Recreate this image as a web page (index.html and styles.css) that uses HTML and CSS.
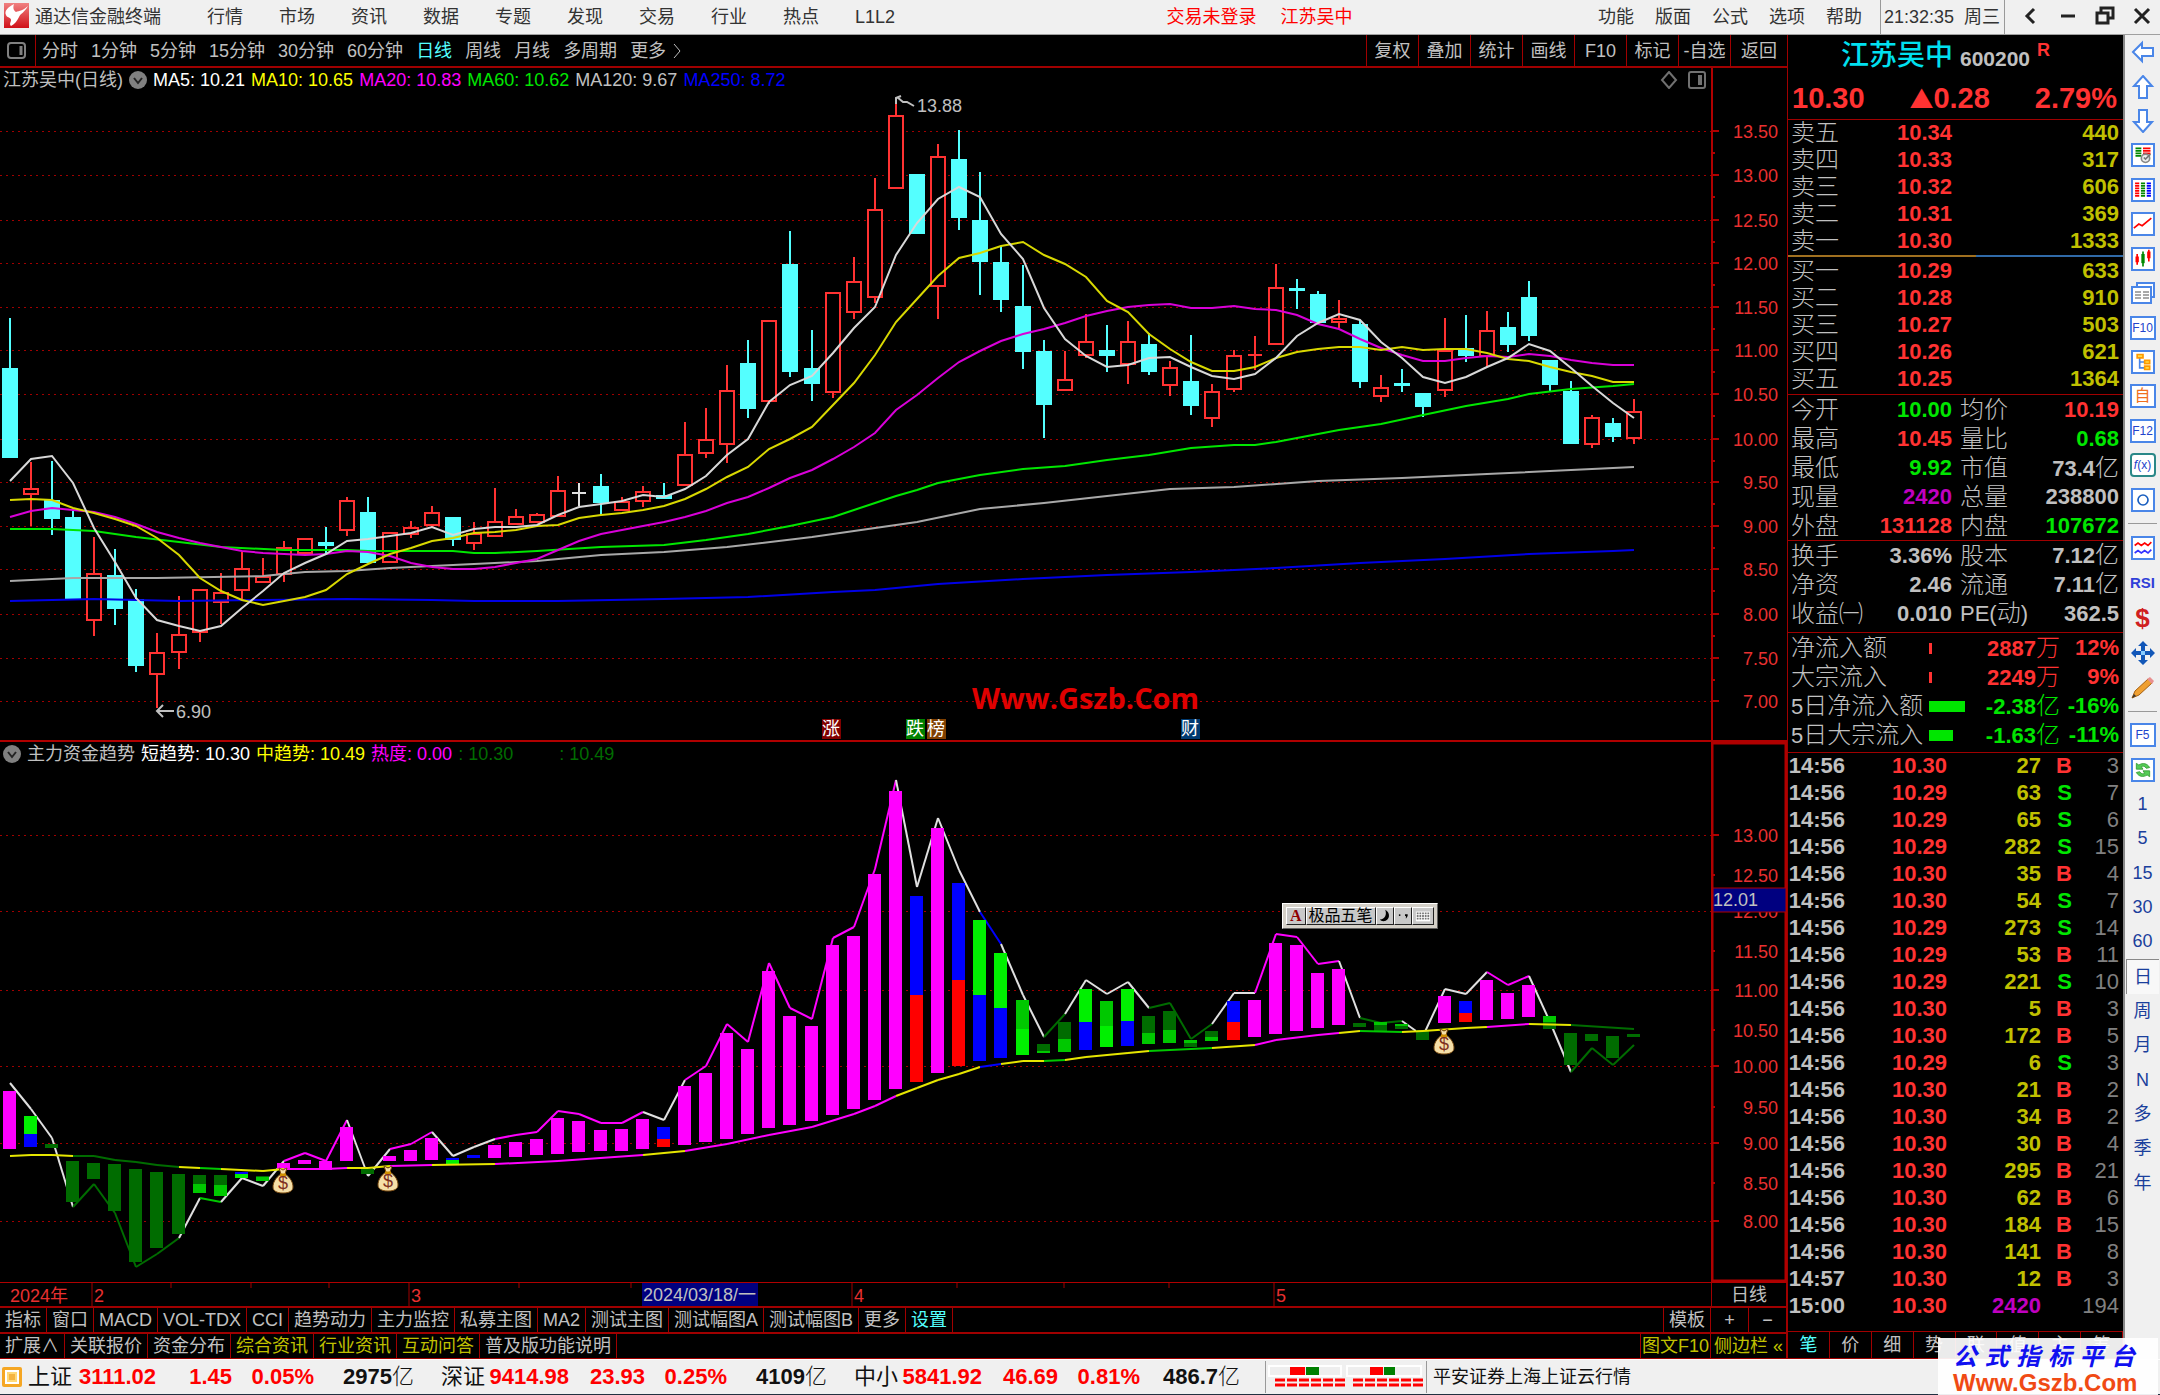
FILE: index.html
```html
<!DOCTYPE html>
<html lang="zh-CN">

<head>
    <meta charset="UTF-8">
    <meta name="viewport" content="width=device-width, initial-scale=1.0">
    <title>通达信金融终端 - 江苏吴中</title>
    <link rel="stylesheet" href="styles.css">
</head>

<body>
    <header class="titlebar">
        <svg class="logo" viewBox="0 0 25 25">
            <defs>
                <linearGradient id="logo-bg" x1="0" y1="0" x2="0" y2="1">
                    <stop offset="0" stop-color="#f08080" />
                    <stop offset="1" stop-color="#d01018" />
                </linearGradient>
            </defs>
            <rect width="25" height="25" fill="url(#logo-bg)" />
            <path d="M10 1C4 4 0 8 2 12c1 3 5 2 5 5 0 2-2 4 0 6 4-2 6-5 8-9 1-3 6-5 9-11-4 4-9 5-12 6-3-2-3-5-2-8z" fill="#fff" />
        </svg>
        <span class="brand">通达信金融终端</span>
        <nav class="menu">
            <button>行情</button><button>市场</button><button>资讯</button><button>数据</button><button>专题</button><button>发现</button><button>交易</button><button>行业</button><button>热点</button><button>L1L2</button>
        </nav>
        <div class="session"><span>交易未登录</span><span>江苏吴中</span></div>
        <nav class="menu menu-right">
            <button>功能</button><button>版面</button><button>公式</button><button>选项</button><button>帮助</button>
        </nav>
        <div class="clock"><span>21:32:35</span><span>周三</span></div>
        <div class="window-buttons">
            <button aria-label="后退"><svg viewBox="0 0 20 20"><path d="M13 3L6 10l7 7" /></svg></button>
            <button aria-label="最小化"><svg viewBox="0 0 20 20"><path d="M3 10h14" /></svg></button>
            <button aria-label="还原"><svg viewBox="0 0 20 20"><path d="M6 6V2h12v10h-4M2 7h11v10H2z" /></svg></button>
            <button aria-label="关闭"><svg viewBox="0 0 20 20"><path d="M3 3l14 14M17 3L3 17" /></svg></button>
        </div>
    </header>

    <main class="workspace">
        <section class="charts">
            <div class="periods">
                <button class="panel-toggle" aria-label="面板"><svg viewBox="0 0 20 18"><rect x="1" y="1" width="17" height="15" rx="3" /><path d="M14 4v9" stroke-width="3" /></svg></button>
                <nav class="period-list">
                    <button>分时</button><button>1分钟</button><button>5分钟</button><button>15分钟</button><button>30分钟</button><button>60分钟</button><button class="active">日线</button><button>周线</button><button>月线</button><button>多周期</button><button class="more">更多<svg viewBox="0 0 10 16"><path d="M2 1l6 7-6 7" /></svg></button>
                </nav>
                <nav class="tools">
                    <button>复权</button><button>叠加</button><button>统计</button><button>画线</button><button>F10</button><button>标记</button><button>-自选</button><button>返回</button>
                </nav>
            </div>

            <div class="pane">
                <div class="plot">
                    <div class="legend">
                        <span>江苏吴中(日线)</span>
                        <svg class="drop" viewBox="0 0 18 18"><circle cx="9" cy="9" r="9" /><path d="M5 7l4 5 4-5" /></svg>
                        <span class="white">MA5: 10.21</span>
                        <span class="yellow">MA10: 10.65</span>
                        <span class="magenta">MA20: 10.83</span>
                        <span class="green">MA60: 10.62</span>
                        <span>MA120: 9.67</span>
                        <span class="blue">MA250: 8.72</span>
                        <svg class="pane-icons" viewBox="0 0 46 18"><path d="M9 1l7 8-7 8-7-8z" /><rect x="29" y="1" width="16" height="16" rx="2" /><path d="M40 4v10" stroke-width="4" /></svg>
                    </div>
                    <svg id="kline" class="canvas" viewBox="0 92 1711 648" preserveAspectRatio="none"></svg>
                </div>
                <svg id="kline-axis" class="axis" viewBox="0 68 76 672" preserveAspectRatio="none"></svg>
            </div>

            <div class="pane pane-trend">
                <div class="plot">
                    <div class="legend">
                        <svg class="drop" viewBox="0 0 18 18"><circle cx="9" cy="9" r="9" /><path d="M5 7l4 5 4-5" /></svg>
                        <span>主力资金趋势</span>
                        <span class="white">短趋势: 10.30</span>
                        <span class="yellow">中趋势: 10.49</span>
                        <span class="magenta">热度: 0.00</span>
                        <span class="darkgreen">: 10.30</span>
                        <span class="darkgreen apart">: 10.49</span>
                    </div>
                    <svg id="trend" class="canvas" viewBox="0 766 1711 516" preserveAspectRatio="none"></svg>
                </div>
                <svg id="trend-axis" class="axis" viewBox="0 742 76 540" preserveAspectRatio="none"></svg>
                <div class="ime">
                    <button class="ime-a">A</button>
                    <button>极品五笔</button>
                    <button aria-label="半角"><svg viewBox="0 0 14 18"><path d="M7 2c6 3 6 12-2 13-2 0-3-1-4-2 6 0 8-6 6-11z" /></svg></button>
                    <button aria-label="标点"><svg viewBox="0 0 14 18"><circle cx="3" cy="8" r="1" /><path d="M9 7h3v2l-2 3v-3H9z" /></svg></button>
                    <button aria-label="软键盘"><svg viewBox="0 0 18 18"><path d="M1 4h16v11H1z" fill="#fff" /><path d="M2 6h14M2 9h14M2 12h14" stroke="#777" stroke-width="2" stroke-dasharray="2 1" /></svg></button>
                </div>
            </div>

            <div class="dates">
                <svg id="dates" viewBox="0 1282 1711 24" preserveAspectRatio="none"></svg>
                <button class="axis-cell">日线</button>
            </div>
            <div class="tabs">
                <button>指标</button><button>窗口</button><button>MACD</button><button>VOL-TDX</button><button>CCI</button><button>趋势动力</button><button>主力监控</button><button>私募主图</button><button>MA2</button><button>测试主图</button><button>测试幅图A</button><button>测试幅图B</button><button>更多</button><button class="cyan">设置</button>
                <button class="push">模板</button>
                <div class="axis-cell zoom"><button>+</button><button>−</button></div>
            </div>
            <div class="tabs">
                <button>扩展∧</button><button>关联报价</button><button>资金分布</button><button class="gold">综合资讯</button><button class="gold">行业资讯</button><button class="gold">互动问答</button><button>普及版功能说明</button>
                <button class="push gold tight">图文F10</button>
                <button class="axis-cell gold tight">侧边栏 «</button>
            </div>
        </section>

        <aside class="quote">
            <div class="quote-head">
                <h1><span class="stock">江苏吴中</span> <span class="code">600200</span> <sup>R</sup></h1>
                <div class="price"><span>10.30</span><span><span class="arrow">▲</span>0.28</span><span>2.79%</span></div>
            </div>
            <table class="book" id="asks"></table>
            <div class="ratio"></div>
            <table class="book bids" id="bids"></table>
            <table class="info">
                <tr><th>今开</th><td class="dn">10.00</td><th>均价</th><td class="up">10.19</td></tr>
                <tr><th>最高</th><td class="up">10.45</td><th>量比</th><td class="dn">0.68</td></tr>
                <tr><th>最低</th><td class="dn">9.92</td><th>市值</th><td>73.4<i>亿</i></td></tr>
                <tr><th>现量</th><td class="vol">2420</td><th>总量</th><td>238800</td></tr>
                <tr><th>外盘</th><td class="up">131128</td><th>内盘</th><td class="dn">107672</td></tr>
            </table>
            <table class="info roomy">
                <tr><th>换手</th><td>3.36%</td><th>股本</th><td>7.12<i>亿</i></td></tr>
                <tr><th>净资</th><td>2.46</td><th>流通</th><td>7.11<i>亿</i></td></tr>
                <tr><th>收益㈠</th><td>0.010</td><th><b>PE(</b>动<b>)</b></th><td>362.5</td></tr>
            </table>
            <table class="flow">
                <tr class="up"><th>净流入额</th><td class="meter"><span style="width: 3px"></span></td><td>2887<i>万</i></td><td>12%</td></tr>
                <tr class="up"><th>大宗流入</th><td class="meter"><span style="width: 3px"></span></td><td>2249<i>万</i></td><td>9%</td></tr>
                <tr class="dn"><th><b>5</b>日净流入额</th><td class="meter"><span style="width: 36px"></span></td><td>-2.38<i>亿</i></td><td>-16%</td></tr>
                <tr class="dn"><th><b>5</b>日大宗流入</th><td class="meter"><span style="width: 24px"></span></td><td>-1.63<i>亿</i></td><td>-11%</td></tr>
            </table>
            <div class="ticks-wrap">
                <table class="ticks" id="ticks"></table>
            </div>
            <nav class="quote-tabs">
                <button class="cyan">笔</button><button>价</button><button>细</button><button>势</button><button>联</button><button>值</button><button>主</button><button>筹</button>
            </nav>
        </aside>

        <nav class="sidebar">
            <div class="side-group tall">
                <button aria-label="左"><svg viewBox="0 0 24 24"><path d="M2 12l9-9v5h11v8H11v5z" fill="#fff" stroke="#4a86e8" /></svg></button>
                <button aria-label="上"><svg viewBox="0 0 24 24"><path d="M12 1l9 10h-5v12H8V11H3z" fill="#fff" stroke="#4a86e8" /></svg></button>
                <button aria-label="下"><svg viewBox="0 0 24 24"><path d="M12 23l9-10h-5V1H8v12H3z" fill="#fff" stroke="#4a86e8" /></svg></button>
                <button aria-label="自选"><svg class="box" viewBox="0 0 24 24"><path d="M3 4h7M3 7h7M3 10h7M3 13h7" stroke="#080" /><path d="M12 4h9M12 7h9M12 10h9" stroke="#f00" /><circle cx="15" cy="16" r="5" fill="#eee" stroke="#888" /><path d="M13 15l2 2 6-6" stroke="#777" /></svg></button>
                <button aria-label="报价"><svg class="box" viewBox="0 0 24 24"><g stroke-dasharray="2 1"><path d="M5 3v18" stroke="#f00" stroke-width="5" /><path d="M12 3v18" stroke="#080" stroke-width="5" /><path d="M19 3v18" stroke="#00f" stroke-width="5" /></g></svg></button>
                <button aria-label="分时"><svg class="box" viewBox="0 0 24 24"><path d="M1 17l6-5 4 2 11-9" stroke="#f00" stroke-width="2" /></svg></button>
                <button aria-label="K线"><svg class="box" viewBox="0 0 24 24"><path d="M5 6v13M19 1v14" stroke="#f00" /><path d="M12 3v18" stroke="#080" /><path d="M3 9h4v7H3zM17 3h4v8h-4z" fill="#f00" /><path d="M10 6h4v11h-4z" fill="#080" /></svg></button>
                <button aria-label="多窗口"><svg viewBox="0 0 24 24"><path d="M6 5V2h17v14h-3" fill="#fff" stroke="#4a86e8" /><path d="M1 6h19v16H1z" fill="#fff" stroke="#4a86e8" stroke-width="2" /><path d="M4 11h6M4 14h6M4 17h6M12 11h6M12 14h6M12 17h6" stroke="#555" stroke-width="1" /></svg></button>
                <button><span class="key">F10</span></button>
                <button aria-label="板块"><svg class="box" viewBox="0 0 24 24"><path d="M8 6v13h6M8 12h6" stroke="#4a86e8" /><path d="M5 3h7v4H5zM14 10h6v4h-6zM14 17h6v4h-6z" fill="#fd4" stroke="#f90" /></svg></button>
                <button><span class="key orange">自</span></button>
                <button><span class="key">F12</span></button>
                <button><span class="key round"><em>f</em>(x)</span></button>
                <button aria-label="刷新"><svg class="box" viewBox="0 0 24 24"><circle cx="12" cy="12" r="6" stroke="#1a5fc0" /></svg></button>
            </div>
            <hr>
            <div class="side-group">
                <button aria-label="指标"><svg class="box" viewBox="0 0 24 24"><path d="M2 9l4-3 4 3 4-3 4 3 4-4" stroke="#f00" /><path d="M2 18l4-3 4 3 4-3 4 3 4-4" stroke="#33f" /></svg></button>
                <button class="rsi">RSI</button>
                <button class="dollar">$</button>
                <button aria-label="移动"><svg viewBox="0 0 24 24"><path d="M12 0l5 5h-3v5h5V7l5 5-5 5v-3h-5v5h3l-5 5-5-5h3v-5H5v3l-5-5 5-5v3h5V5H7z" fill="#1257b8" /><path d="M10 10h4v4h-4z" fill="#8cf" /></svg></button>
                <button aria-label="画笔"><svg viewBox="0 0 24 24"><path d="M1 22l3-7L17 3l4 4L8 19z" fill="#f0a030" stroke="#a66010" stroke-width="1" /><path d="M16 3l3-2 4 4-2 3z" fill="#e89090" /><path d="M1 22l2-4 2 2z" fill="#333" /></svg></button>
            </div>
            <hr>
            <div class="side-group tall">
                <button><span class="key">F5</span></button>
                <button aria-label="更新"><svg class="box" viewBox="0 0 24 24"><path d="M4 11V4l3 2c5-3 10-2 13 3l-4 1c-2-3-4-3-6-2l2 3zM20 13v7l-3-2c-5 3-10 2-13-3l4-1c2 3 4 3 6 2l-2-3z" fill="#5c5" stroke="#393" stroke-width="1" /></svg></button>
                <button>1</button><button>5</button><button>15</button><button>30</button><button>60</button><button class="pressed">日</button><button>周</button><button>月</button><button>N</button><button>多</button><button>季</button><button>年</button>
            </div>
        </nav>
    </main>

    <footer class="statusbar">
        <svg class="status-icon" viewBox="0 0 20 20"><rect width="20" height="20" rx="2" fill="#f5a623" /><path d="M4 4h12v12H4z" fill="#ffd978" stroke="#fff" stroke-width="2" /><path d="M7 7h6v6H7z" fill="#f5b440" /></svg>
        <div class="index"><span>上证</span><b>3111.02</b><b>1.45</b><b>0.05%</b><b class="amount">2975<i>亿</i></b></div>
        <div class="index"><span>深证</span><b>9414.98</b><b>23.93</b><b>0.25%</b><b class="amount">4109<i>亿</i></b></div>
        <div class="index"><span>中小</span><b>5841.92</b><b>46.69</b><b>0.81%</b><b class="amount">486.7<i>亿</i></b></div>
        <svg class="leds" viewBox="0 0 160 28">
            <path d="M3 3h72v10H3zM81 3h74v10H81z" fill="#eee" stroke="#fff" stroke-width="2" />
            <path d="M24 4h15v8H24zM104 4h13v8h-13z" fill="#f00" />
            <path d="M40 4h13v8H40zM118 4h11v8h-11z" fill="#008000" />
            <path d="M9 17h70M9 22h70M87 17h70M87 22h70" stroke="#f00" stroke-width="3" stroke-dasharray="10 2" />
        </svg>
        <span class="server">平安证券上海上证云行情</span>
    </footer>

    <div class="stamp">
        <div class="stamp-name"><span>公</span><span>式</span><span>指</span><span>标</span><span>平</span><span>台</span></div>
        <div class="stamp-url">Www.Gszb.Com</div>
    </div>

    <script src="chart.js"></script>
</body>

</html>
```
FILE: styles.css
```css
* {
    box-sizing: border-box;
}

body {
    margin: 0;
    height: 100vh;
    display: grid;
    grid-template-rows: 35px 1fr 36px;
    overflow: hidden;
    background: #000;
    color: #c0c0c0;
    font-family: "Liberation Sans", "Noto Sans CJK SC", sans-serif;
    font-size: 18px;
    line-height: 24px;
}

button {
    border: 0;
    padding: 0;
    background: none;
    color: inherit;
    font: inherit;
    white-space: nowrap;
    cursor: pointer;
}

svg {
    display: block;
    fill: none;
}

i {
    font-style: normal;
    font-weight: 300;
}

.white { color: #fff; }
.yellow { color: #ff0; }
.magenta { color: #f0f; }
.green { color: #00e600; }
.darkgreen { color: #006c00; }
.blue { color: #00f; }
.cyan { color: #54ffff; }
.gold { color: #c0c000; }

/* title bar */
.titlebar {
    display: flex;
    align-items: center;
    background: #f0f0f0;
    border-bottom: 1px solid #a0a0a0;
    color: #333;
}

.logo {
    width: 25px;
    height: 25px;
    margin: 0 6px 4px 4px;
}

.brand {
    margin-right: 46px;
}

.menu {
    display: flex;
    gap: 36px;
}

.session {
    display: flex;
    gap: 24px;
    margin: 0 auto;
    padding-left: 26px;
    color: #f00;
}

.menu-right {
    gap: 21px;
    margin-right: 18px;
}

.clock {
    display: flex;
    align-items: center;
    gap: 10px;
    height: 34px;
    padding: 0 4px 0 3px;
    border-left: 1px solid #999;
    border-right: 1px solid #999;
}

.window-buttons {
    display: flex;
    gap: 17px;
    padding: 0 8px 2px 16px;
}

.window-buttons svg {
    width: 20px;
    height: 20px;
    stroke: #222;
    stroke-width: 3;
}

/* layout */
.workspace {
    display: grid;
    grid-template-columns: 1fr 336px 37px;
    min-height: 0;
}

.charts {
    display: grid;
    grid-template-rows: 33px 672fr 542fr 24px 26px 27px;
    min-width: 0;
    min-height: 0;
}

.periods {
    display: flex;
    border-bottom: 2px solid #a00000;
}

.panel-toggle {
    width: 36px;
    padding-left: 7px;
    border-right: 1px solid #a00000;
}

.panel-toggle svg {
    width: 20px;
    height: 18px;
    stroke: #808080;
    stroke-width: 2;
}

.period-list {
    display: flex;
    gap: 13px;
    padding-left: 6px;
}

.period-list .active {
    color: #54ffff;
}

.more {
    display: flex;
    align-items: center;
    gap: 6px;
}

.more svg {
    width: 10px;
    height: 16px;
    stroke: #c0c0c0;
}

.tools {
    display: flex;
    margin-left: auto;
}

.tools button {
    width: 52px;
    border-left: 1px solid #a00000;
}

.tools button:last-child {
    width: 57px;
}

/* chart panes */
.pane {
    position: relative;
    display: grid;
    grid-template-columns: 1fr 76px;
    min-height: 0;
}

.pane-trend {
    border-top: 2px solid #b00000;
}

.plot {
    display: flex;
    flex-direction: column;
    min-width: 0;
    min-height: 0;
}

.legend {
    display: flex;
    align-items: center;
    gap: 6px;
    height: 24px;
    padding-left: 3px;
}

.drop {
    width: 18px;
    height: 18px;
}

.drop circle {
    fill: #808080;
}

.drop path {
    stroke: #222;
    stroke-width: 2;
}

.apart {
    margin-left: 40px;
}

.pane-icons {
    width: 46px;
    height: 18px;
    margin-left: auto;
    margin-right: 5px;
    stroke: #707070;
    stroke-width: 2;
}

.canvas {
    flex: 1;
    width: 100%;
    min-height: 0;
}

.axis {
    width: 100%;
    height: 100%;
    min-height: 0;
}

.tick-mark {
    stroke: #b00000;
    stroke-width: 2;
}

.frame {
    stroke: #b00000;
    stroke-width: 3;
}

svg text {
    font-size: 18px;
}

.tick-label {
    fill: #e83030;
    text-anchor: end;
}

.gridline {
    stroke: #a00000;
    stroke-dasharray: 2 4;
    shape-rendering: crispEdges;
}

.up-candle {
    fill: #000;
    stroke: #ff3232;
    stroke-width: 2;
}

.down-candle {
    fill: #54ffff;
    stroke: #54ffff;
    stroke-width: 2;
}

.flat-candle {
    stroke: #e0e0e0;
    stroke-width: 2;
}

svg .url {
    fill: #e00000;
    font-family: "Open Sans", sans-serif;
    font-size: 29px;
    font-weight: bold;
}

/* floating input method bar */
.ime {
    position: absolute;
    left: 1282px;
    top: 161px;
    display: flex;
    padding: 3px;
    background: #d4d0c8;
    border: 1px solid #fff;
    border-right-color: #606060;
    border-bottom-color: #606060;
    color: #000;
    font-size: 16px;
    line-height: 16px;
}

.ime button {
    display: flex;
    align-items: center;
    padding: 0 2px;
    height: 18px;
    background: #c8c8c8;
    border: 1px solid #fff;
    border-right-color: #222;
    border-bottom-color: #222;
}

.ime svg {
    height: 16px;
    fill: #000;
}

.ime .ime-a {
    padding: 0 3px;
    color: #900000;
    font-family: "Liberation Serif", serif;
    font-weight: bold;
}

/* rows under the charts */
.dates {
    display: grid;
    grid-template-columns: 1fr 76px;
    border-top: 1px solid #b00000;
}

.dates svg {
    width: 100%;
    height: 100%;
}

.dates text {
    fill: #e83030;
}

.dates .picked {
    fill: #c0c0c0;
}

.axis-cell {
    width: 76px;
}

.dates .axis-cell {
    border-left: 1px solid #a00000;
    border-right: 1px solid #a00000;
}

.tabs {
    display: flex;
    border-top: 2px solid #a00000;
}

.tabs:last-child {
    border-bottom: 1px solid #a00000;
}

.tabs button {
    padding: 0 5px;
    border-right: 1px solid #a00000;
}

.tabs .push {
    margin-left: auto;
    border-left: 1px solid #a00000;
}

.tabs .tight {
    padding: 0 1px;
}

.zoom {
    display: flex;
}

.zoom button {
    flex: 1;
}

/* quote panel */
.quote {
    display: flex;
    flex-direction: column;
    min-height: 0;
    border-left: 1px solid #a00000;
}

.quote-head {
    height: 84px;
    color: #ff3232;
}

.quote h1 {
    display: flex;
    justify-content: center;
    align-items: center;
    gap: 7px;
    height: 42px;
    margin: 0;
    padding-right: 20px;
    font-size: 21px;
}

.stock {
    color: #00e0f0;
    font-size: 28px;
    font-weight: 500;
}

.code {
    padding-top: 5px;
    color: #c0c0c0;
}

.quote h1 sup {
    align-self: flex-start;
    padding-top: 3px;
    font-size: 18px;
}

.price {
    display: flex;
    justify-content: space-between;
    align-items: center;
    height: 42px;
    padding: 0 6px 0 4px;
    font-size: 29px;
    font-weight: bold;
}

.arrow {
    font-family: "Noto Sans CJK SC", sans-serif;
    font-size: 24px;
}

.quote table {
    width: 100%;
    table-layout: fixed;
    border-collapse: collapse;
    border-top: 1px solid #a00000;
    font-size: 22px;
}

.quote th,
.quote td {
    height: 29px;
    padding: 0;
    white-space: nowrap;
    line-height: 24px;
}

.quote th {
    padding-left: 3px;
    color: #c0c0c0;
    font-size: 24px;
    font-weight: 300;
    text-align: left;
}

.quote th b {
    font-size: 22px;
}

.quote td {
    font-weight: bold;
    text-align: right;
}

.quote td i {
    font-size: 24px;
}

.quote td:last-child {
    padding-right: 4px;
}

.quote .book th,
.quote .book td {
    height: 27px;
}

.book td:nth-child(2) {
    width: 85px;
    color: #ff3232;
}

.book td:last-child {
    width: 171px;
    color: #c0c000;
}

.ratio {
    height: 2px;
    background: linear-gradient(to right, #a07020 56%, #306aa8 56%);
}

.quote .bids {
    margin-bottom: 2px;
    border-top: 1px solid #000;
}

.quote .info th,
.quote .info td,
.quote .flow th,
.quote .flow td {
    padding-top: 2px;
}

.info th {
    width: 77px;
}

.info td:nth-child(2) {
    width: 87px;
}

.info th:nth-child(3) {
    padding-left: 8px;
}

.roomy {
    margin-bottom: 5px;
}

.up td,
.info .up {
    color: #ff3232;
}

.dn td,
.info .dn {
    color: #00e600;
}

.info .vol {
    color: #c000c0;
}

.flow {
    margin-bottom: 3px;
}

.flow th {
    width: 141px;
}

.flow .meter {
    width: 40px;
    text-align: left;
}

.meter span {
    display: block;
    height: 11px;
    background: #00e600;
}

.up .meter span {
    background: #ff3232;
}

.flow td:nth-child(3) {
    width: 91px;
}

.ticks-wrap {
    flex: 1;
    min-height: 0;
    overflow: hidden;
}

.quote .ticks td {
    height: 27px;
}

.ticks td:nth-child(1) {
    width: 57px;
}

.ticks td:nth-child(2) {
    width: 102px;
    color: #ff3232;
}

.ticks td:nth-child(3) {
    width: 94px;
    color: #c0c000;
}

.ticks td:nth-child(4) {
    width: 31px;
}

.ticks td:nth-child(5) {
    color: #808080;
    font-weight: 400;
}

.ticks .buy { color: #ff3232; }
.ticks .sell { color: #00e600; }
.quote .ticks .deal { color: #c000c0; }

.quote-tabs {
    display: flex;
    height: 28px;
    border-top: 1px solid #a00000;
    border-bottom: 1px solid #a00000;
}

.quote-tabs button {
    flex: 1;
    border-right: 1px solid #a00000;
}

/* icon strip */
.sidebar {
    background: #f0f0f0;
    border-left: 2px solid #888;
    color: #1a3f9c;
}

.side-group {
    display: flex;
    flex-direction: column;
    align-items: center;
}

.side-group button {
    width: 33px;
    height: 35px;
}

.tall {
    height: 482px;
}

.tall button {
    flex: 1;
    min-height: 0;
}

.sidebar svg {
    width: 24px;
    height: 24px;
    margin: 0 auto;
    stroke-width: 2;
}

.sidebar .box,
.key {
    background: #fff;
    border: 2px solid #4a86e8;
}

.key {
    display: block;
    width: 26px;
    height: 24px;
    margin: 0 auto;
    color: #2244cc;
    font-size: 12px;
    line-height: 20px;
}

.orange {
    color: #f07020;
    font-size: 16px;
}

.round {
    border-color: #2a8888;
    border-radius: 4px;
}

.sidebar hr {
    height: 1px;
    margin: 6px 3px;
    border: 0;
    background: #999;
}

.sidebar .rsi {
    color: #3040d8;
    font-size: 15px;
    font-weight: bold;
}

.sidebar .dollar {
    color: #d02020;
    font-size: 26px;
    font-weight: bold;
}

.sidebar .pressed {
    background: #f8f8f8;
    border-left: 1px solid #888;
    border-top: 1px solid #888;
}

/* status bar */
.statusbar {
    display: flex;
    align-items: center;
    background: #f0f0f0;
    border-top: 1px solid #fff;
    border-bottom: 1px solid #203040;
    color: #111;
}

.status-icon {
    width: 20px;
    height: 20px;
    margin: 0 4px 0 2px;
}

.index {
    display: grid;
    grid-template-columns: 46px 84px 76px 82px 100px;
    align-items: baseline;
    margin-right: 25px;
    color: #f00;
    font-size: 22px;
    text-align: right;
}

.index span,
.index .amount {
    color: #111;
}

.leds {
    width: 162px;
    height: 32px;
    border-left: 1px solid #999;
    border-right: 1px solid #999;
}

.server {
    padding-left: 6px;
}

/* corner stamp lies over the quote tabs and the status bar */
.stamp {
    position: absolute;
    right: 2px;
    bottom: 0;
    width: 220px;
    height: 57px;
    padding: 5px 15px 0;
    background: rgba(255, 255, 255, 0.92);
}

.stamp-name {
    display: flex;
    justify-content: space-between;
    padding-right: 8px;
    color: #1010f0;
    font-size: 24px;
    font-style: italic;
    font-weight: bold;
    line-height: 28px;
}

.stamp-url {
    color: #f04a14;
    font-size: 24px;
    font-weight: bold;
    line-height: 24px;
}
```
FILE: chart.js
```js
// distance between two trading days, and the first day's centre
const STEP = 21.1;
const FIRST = 9.7;
const x = i => Math.round(FIRST + STEP * i);

const COLORS = {
    w: '#e0e0e0', y: '#e6e600', m: '#f0f', g: '#00f000', c: '#00c800',
    d: '#006c00', b: '#00f', r: '#f00'
};

// kind, high, body top, body bottom, low
const candles = [
    ['c', 318, 368, 458, 458], ['r', 462, 488, 495, 526], ['c', 461, 500, 519, 535], ['c', 511, 517, 599, 599],
    ['r', 537, 573, 621, 636], ['c', 549, 575, 609, 625], ['c', 589, 599, 666, 672], ['r', 633, 652, 675, 708],
    ['r', 596, 634, 653, 669], ['r', 589, 589, 633, 642], ['r', 573, 592, 603, 624], ['r', 552, 568, 591, 600],
    ['r', 558, 576, 583, 583], ['r', 541, 547, 575, 582], ['r', 538, 538, 554, 554], ['c', 527, 542, 546, 554],
    ['r', 497, 500, 531, 536], ['c', 497, 512, 563, 563], ['r', 532, 532, 563, 563], ['r', 521, 527, 535, 538],
    ['r', 506, 512, 526, 527], ['c', 517, 517, 540, 546], ['r', 522, 533, 544, 550], ['r', 488, 521, 537, 537],
    ['r', 509, 516, 525, 525], ['r', 513, 514, 523, 523], ['r', 476, 490, 517, 517], ['f', 483, 493, 493, 506],
    ['c', 474, 486, 503, 515], ['r', 497, 501, 511, 511], ['r', 486, 491, 502, 507], ['c', 483, 495, 499, 499],
    ['r', 422, 454, 486, 486], ['r', 408, 439, 454, 458], ['r', 365, 390, 445, 463], ['c', 340, 363, 409, 418],
    ['r', 320, 320, 402, 404], ['c', 231, 264, 372, 377], ['c', 330, 368, 384, 401], ['r', 292, 292, 393, 398],
    ['r', 257, 281, 313, 319], ['r', 178, 209, 298, 303], ['r', 101, 115, 189, 189], ['c', 174, 174, 234, 234],
    ['r', 144, 156, 287, 319], ['c', 130, 159, 218, 230], ['c', 172, 220, 262, 295], ['c', 246, 262, 300, 312],
    ['c', 265, 306, 352, 369], ['c', 340, 351, 405, 438], ['r', 351, 379, 391, 391], ['r', 314, 341, 356, 358],
    ['c', 325, 350, 356, 372], ['r', 321, 341, 365, 384], ['c', 333, 344, 372, 375], ['r', 361, 367, 386, 396],
    ['c', 335, 381, 406, 415], ['r', 384, 391, 419, 427], ['r', 350, 355, 390, 392], ['r', 336, 355, 355, 370],
    ['r', 264, 287, 345, 345], ['c', 279, 288, 291, 309], ['c', 291, 294, 323, 323], ['r', 300, 318, 323, 328],
    ['c', 320, 324, 382, 388], ['r', 375, 387, 397, 402], ['c', 369, 383, 385, 392], ['c', 393, 393, 407, 417],
    ['r', 318, 350, 391, 397], ['c', 315, 348, 356, 362], ['r', 311, 330, 357, 367], ['c', 312, 327, 345, 352],
    ['c', 281, 297, 336, 341], ['c', 360, 360, 385, 391], ['c', 381, 391, 444, 444], ['r', 415, 417, 445, 448],
    ['c', 418, 423, 437, 442], ['r', 399, 411, 439, 444]
];

const ma5 = [481, 459, 456, 483, 528, 562, 598, 620, 626, 631, 626, 608, 591, 573, 563, 554, 541, 539, 536, 533, 527, 535, 529, 527, 527, 525, 515, 507, 504, 501, 495, 497, 489, 476, 455, 439, 402, 385, 376, 353, 328, 307, 255, 223, 199, 187, 197, 234, 259, 308, 339, 356, 367, 365, 358, 357, 367, 376, 379, 374, 358, 336, 323, 314, 320, 342, 358, 377, 383, 377, 367, 358, 344, 351, 368, 386, 403, 418];
const ma10 = [500, 499, 500, 508, 513, 519, 526, 538, 555, 578, 591, 600, 605, 601, 597, 590, 574, 564, 554, 548, 541, 538, 533, 532, 530, 526, 525, 518, 515, 513, 510, 506, 499, 489, 477, 467, 449, 439, 427, 405, 383, 355, 322, 299, 276, 258, 253, 246, 242, 255, 264, 277, 301, 312, 334, 349, 362, 371, 371, 367, 358, 352, 349, 347, 347, 350, 347, 350, 349, 349, 353, 359, 361, 367, 372, 376, 382, 382];
const ma20 = [517, 511, 508, 510, 512, 517, 524, 532, 538, 543, 547, 551, 553, 554, 555, 554, 551, 552, 556, 563, 567, 569, 569, 567, 563, 559, 550, 541, 534, 530, 526, 522, 517, 511, 503, 497, 488, 478, 470, 459, 447, 433, 410, 395, 378, 362, 351, 341, 334, 329, 323, 316, 311, 307, 305, 304, 308, 308, 306, 309, 310, 315, 324, 329, 339, 348, 355, 361, 361, 358, 356, 357, 354, 356, 360, 363, 365, 365];

// slow averages only need their turning points: [day, y]
const ma60 = [[0, 529], [2, 529], [4, 531], [6, 537], [8, 542], [10, 547], [13, 550], [16, 550], [17, 551], [21, 551], [22, 553], [23, 553], [25, 551], [28, 547], [31, 545], [33, 540], [35, 534], [37, 526], [39, 517], [40, 510], [41, 503], [42, 496], [43, 490], [44, 483], [46, 475], [48, 469], [50, 466], [52, 460], [54, 455], [56, 448], [58, 445], [59, 445], [60, 442], [62, 434], [63, 430], [65, 424], [67, 415], [69, 406], [71, 399], [72, 394], [74, 389], [76, 386], [77, 384]];
const ma120 = [[0, 581], [3, 578], [7, 578], [12, 576], [14, 572], [16, 571], [18, 568], [22, 564], [25, 561], [28, 555], [31, 552], [34, 547], [38, 537], [40, 531], [43, 522], [46, 509], [49, 503], [52, 496], [55, 489], [58, 487], [62, 481], [66, 478], [70, 474], [74, 470], [77, 467]];
const ma250 = [[0, 601], [4, 599], [8, 601], [12, 600], [16, 599], [20, 600], [22, 601], [26, 601], [31, 599], [35, 597], [39, 592], [41, 590], [44, 584], [48, 579], [52, 575], [56, 572], [60, 568], [64, 563], [68, 559], [72, 554], [76, 551], [77, 550]];

// trend bars: day, top, then colour and bottom of each segment
const bars = [
    [0, 1091, 'm', 1149], [1, 1116, 'g', 1134, 'b', 1147], [2, 1144, 'd', 1148], [3, 1161, 'd', 1202], [4, 1163, 'd', 1179],
    [5, 1164, 'd', 1211], [6, 1169, 'd', 1262], [7, 1172, 'd', 1248], [8, 1174, 'd', 1234], [9, 1175, 'd', 1184, 'c', 1193],
    [10, 1175, 'd', 1185, 'c', 1196], [11, 1172, 'b', 1174, 'g', 1178], [12, 1176, 'd', 1177, 'c', 1181], [13, 1163, 'm', 1169],
    [14, 1160, 'm', 1164], [15, 1161, 'm', 1170], [16, 1127, 'm', 1161], [17, 1169, 'd', 1174], [18, 1156, 'm', 1161],
    [19, 1150, 'm', 1161], [20, 1138, 'm', 1160], [21, 1158, 'b', 1160, 'g', 1164], [22, 1155, 'b', 1158], [23, 1145, 'm', 1158],
    [24, 1142, 'm', 1157], [25, 1139, 'm', 1155], [26, 1118, 'm', 1154], [27, 1121, 'm', 1152], [28, 1130, 'm', 1151],
    [29, 1129, 'm', 1151], [30, 1119, 'm', 1149], [31, 1127, 'b', 1139, 'r', 1147], [32, 1086, 'm', 1145], [33, 1073, 'm', 1142],
    [34, 1033, 'm', 1139], [35, 1049, 'm', 1134], [36, 971, 'm', 1128], [37, 1016, 'm', 1125], [38, 1026, 'm', 1121],
    [39, 945, 'm', 1115], [40, 936, 'm', 1109], [41, 874, 'm', 1100], [42, 791, 'm', 1089], [43, 896, 'b', 995, 'r', 1082],
    [44, 828, 'm', 1073], [45, 883, 'b', 980, 'r', 1066], [46, 920, 'g', 995, 'b', 1061], [47, 953, 'g', 1008, 'b', 1058],
    [48, 1000, 'c', 1029, 'g', 1055], [49, 1044, 'd', 1051, 'c', 1053], [50, 1022, 'd', 1039, 'c', 1052],
    [51, 989, 'g', 1022, 'b', 1050], [52, 1001, 'c', 1026, 'g', 1047], [53, 989, 'g', 1021, 'b', 1046],
    [54, 1016, 'd', 1033, 'c', 1044], [55, 1011, 'd', 1030, 'c', 1043], [56, 1040, 'c', 1043, 'd', 1047],
    [57, 1031, 'd', 1037, 'c', 1041], [58, 1001, 'b', 1022, 'r', 1040], [59, 1000, 'm', 1037], [60, 943, 'm', 1034],
    [61, 945, 'm', 1031], [62, 973, 'm', 1028], [63, 969, 'm', 1025], [64, 1023, 'd', 1027], [65, 1022, 'c', 1025, 'd', 1031],
    [66, 1024, 'c', 1026, 'd', 1029], [67, 1030, 'd', 1040], [68, 996, 'm', 1023], [69, 1001, 'b', 1013, 'r', 1022],
    [70, 980, 'm', 1020], [71, 993, 'm', 1019], [72, 985, 'm', 1017], [73, 1016, 'c', 1022, 'd', 1029], [74, 1033, 'd', 1065],
    [75, 1034, 'd', 1041], [76, 1036, 'd', 1058], [77, 1034, 'd', 1037]
];

// colour of a point belongs to the segment that ends there
const shortTrend = [
    1083, 1109, 1138, 1207, 1184, 1213, 1267, 1254, 1238, 1198, 1202, 1178, 1186, 1161, 1153, 1161, 1120, 1176, 1149, 1144,
    1132, 1156, 1147, 1139, 1135, 1132, 1111, 1114, 1123, 1123, 1112, 1120, 1080, 1066, 1024, 1042, 963, 1008, 1019, 938,
    927, 869, 780, 887, 818, 870, 912, 944, 995, 1037, 1014, 980, 994, 982, 1008, 1003, 1039, 1024, 993, 993,
    934, 937, 964, 961, 1018, 1023, 1021, 1036, 989, 994, 972, 985, 976, 1022, 1072, 1048, 1065, 1045
];
const shortColors = 'wwwwdddddwcwwwmmmwwmmwwwmmmmmmmwwmmmmmmmmmmwwwwbwwdwwwwdddwwmmmmwddwwwwmmwwddd';

const midTrend = [
    [0, 1156, 'y'], [1, 1155, 'y'], [2, 1155, 'y'], [3, 1156, 'y'], [4, 1156, 'd'], [5, 1160, 'd'], [6, 1162, 'd'], [7, 1165, 'd'],
    [8, 1167, 'd'], [9, 1168, 'y'], [10, 1169, 'c'], [12, 1171, 'y'], [13, 1169, 'y'], [15, 1169, 'm'], [16, 1168, 'm'],
    [17, 1168, 'y'], [18, 1166, 'y'], [20, 1165, 'm'], [23, 1164, 'y'], [26, 1161, 'm'], [30, 1155, 'm'], [32, 1151, 'y'],
    [34, 1144, 'm'], [36, 1135, 'm'], [38, 1127, 'm'], [40, 1114, 'm'], [41, 1106, 'm'], [42, 1096, 'm'], [43, 1088, 'y'],
    [44, 1080, 'y'], [45, 1074, 'y'], [46, 1067, 'y'], [47, 1064, 'b'], [48, 1061, 'y'], [49, 1061, 'y'], [50, 1060, 'c'],
    [51, 1057, 'y'], [53, 1053, 'y'], [54, 1051, 'y'], [57, 1048, 'c'], [59, 1045, 'y'], [60, 1040, 'm'], [62, 1035, 'm'],
    [63, 1033, 'm'], [64, 1031, 'y'], [66, 1032, 'c'], [67, 1031, 'y'], [69, 1028, 'y'], [70, 1027, 'y'], [72, 1024, 'm'],
    [74, 1025, 'y'], [77, 1029, 'd']
];

const klineScale = [['13.50', 131], ['13.00', 175], ['12.50', 220], ['12.00', 263], ['11.50', 307], ['11.00', 350], ['10.50', 394], ['10.00', 439], ['9.50', 482], ['9.00', 526], ['8.50', 569], ['8.00', 614], ['7.50', 658], ['7.00', 701]];
const trendScale = [['13.00', 835], ['12.50', 875], ['12.00', 911], ['11.50', 951], ['11.00', 990], ['10.50', 1030], ['10.00', 1066], ['9.50', 1107], ['9.00', 1143], ['8.50', 1183], ['8.00', 1221]];

const line = (x1, y1, x2, y2, attrs) => `<line x1="${x1}" y1="${y1}" x2="${x2}" y2="${y2}" ${attrs} />`;
const rect = (l, t, w, h, attrs) => `<rect x="${l}" y="${t}" width="${w}" height="${h}" ${attrs} />`;
const gridline = y => line(0, y, 1711, y, 'class="gridline"');

function polyline(points, color, width) {
    return `<polyline points="${points.map(p => x(p[0]) + ',' + p[1]).join(' ')}" stroke="${color}" stroke-width="${width}" />`;
}

function drawCandle([kind, high, top, bottom, low], i) {
    const cx = x(i);
    const cls = { r: 'up-candle', c: 'down-candle', f: 'flat-candle' }[kind];
    let out = line(cx, high, cx, top, `class="${cls}"`) + line(cx, bottom, cx, low, `class="${cls}"`);
    if (top === bottom) {
        return out + line(cx - 7, top, cx + 7, top, `class="${cls}"`);
    }
    return out + rect(cx - 7, top + 1, 14, Math.max(bottom - top - 2, 1), `class="${cls}"`);
}

function badge(left, char, color) {
    return rect(left, 719, 19, 20, `fill="${color}"`) + `<text x="${left}" y="735" fill="#fff">${char}</text>`;
}

function moneyBag(cx, cy) {
    return `<g transform="translate(${cx - 10} ${cy - 13})">
        <path d="M6 0l4 2 4-2-2 6c6 4 8 9 8 13 0 4-4 6-10 6S0 23 0 19C0 15 2 10 8 6z" fill="#f5dfa8" stroke="#7a4a10" />
        <path d="M7 7h6" stroke="#d09000" stroke-width="3" />
        <text x="5" y="21" fill="#803020">$</text></g>`;
}

function drawKline() {
    const days = list => list.map((y, i) => [i, y]);
    document.getElementById('kline').innerHTML =
        klineScale.map(s => gridline(s[1])).join('') +
        '<g shape-rendering="crispEdges">' + candles.map(drawCandle).join('') + '</g>' +
        polyline(ma250, '#0000e6', 2) + polyline(ma120, '#a8a8a8', 2) + polyline(ma60, '#00e600', 2) +
        polyline(days(ma20), '#d800d8', 2) + polyline(days(ma10), '#d8d800', 2) + polyline(days(ma5), '#d8d8d8', 2) +
        '<path d="M896 104v-6l5-2M897 97l6 5h4l7 4" stroke="#c0c0c0" stroke-width="2" />' +
        '<text x="917" y="112" fill="#c0c0c0">13.88</text>' +
        '<path d="M174 711h-17M163 705l-6 6 6 6" stroke="#c0c0c0" stroke-width="2" />' +
        '<text x="176" y="718" fill="#c0c0c0">6.90</text>' +
        '<text class="url" x="972" y="709">Www.Gszb.Com</text>' +
        badge(822, '涨', '#800000') + badge(906, '跌', '#008000') + badge(927, '榜', '#804000') + badge(1181, '财', '#003a70');
}

function drawTrend() {
    const bodies = bars.map(([day, top, ...parts]) => {
        let out = '';
        for (let i = 0; i < parts.length; i += 2) {
            out += rect(x(day) - 7, top, 13, parts[i + 1] - top, `fill="${COLORS[parts[i]]}"`);
            top = parts[i + 1];
        }
        return out;
    }).join('');
    const short = shortTrend.slice(1).map((y, i) =>
        polyline([[i, shortTrend[i]], [i + 1, y]], COLORS[shortColors[i + 1]], 2)).join('');
    const mid = midTrend.slice(1).map((p, i) => polyline([midTrend[i], p], COLORS[p[2]], 2)).join('');
    document.getElementById('trend').innerHTML =
        trendScale.filter((s, i) => i % 2 === 0).map(s => gridline(s[1])).join('') +
        short + bodies + mid + moneyBag(283, 1181) + moneyBag(388, 1179) + moneyBag(1444, 1042);
}

function drawScale(scale, half) {
    return scale.map(([label, y], i) => {
        const major = half || i % 2 === 0;
        return line(0, y, major ? 8 : 4, y, 'class="tick-mark"') +
            (half && scale[i + 1] ? line(0, y + 22, 4, y + 22, 'class="tick-mark"') : '') +
            `<text class="tick-label" x="67" y="${y + 7}">${label}</text>`;
    }).join('');
}

function drawAxes() {
    document.getElementById('kline-axis').innerHTML =
        line(1, 68, 1, 740, 'class="tick-mark"') + drawScale(klineScale, true);
    // the blue label is the price under the cursor
    document.getElementById('trend-axis').innerHTML =
        drawScale(trendScale, false) +
        rect(1, 743, 74, 538, 'class="frame"') +
        rect(2, 888, 73, 24, 'fill="#000080" stroke="#b00000"') +
        '<text x="2" y="906" fill="#c0c0c0">12.01</text>';
}

function drawDates() {
    const months = [['2', 92], ['3', 409], ['4', 852], ['5', 1274]];
    const weeks = [171, 251, 329, 519, 631, 957, 1064, 1169];
    const red = 'stroke="#a00000"';
    document.getElementById('dates').innerHTML =
        '<text x="10" y="1301">2024年</text>' +
        weeks.map(w => line(w, 1282, w, 1287, red)).join('') +
        months.map(([name, left]) => line(left, 1282, left, 1306, red) + `<text x="${left + 2}" y="1301">${name}</text>`).join('') +
        rect(642, 1282, 116, 24, 'fill="#000080"') +
        '<text class="picked" x="643" y="1300">2024/03/18/一</text>';
}

const asks = [['卖五', '10.34', 440], ['卖四', '10.33', 317], ['卖三', '10.32', 606], ['卖二', '10.31', 369], ['卖一', '10.30', 1333]];
const bids = [['买一', '10.29', 633], ['买二', '10.28', 910], ['买三', '10.27', 503], ['买四', '10.26', 621], ['买五', '10.25', 1364]];
const ticks = [
    ['14:56', '10.30', 27, 'B', 3], ['14:56', '10.29', 63, 'S', 7], ['14:56', '10.29', 65, 'S', 6], ['14:56', '10.29', 282, 'S', 15],
    ['14:56', '10.30', 35, 'B', 4], ['14:56', '10.30', 54, 'S', 7], ['14:56', '10.29', 273, 'S', 14], ['14:56', '10.29', 53, 'B', 11],
    ['14:56', '10.29', 221, 'S', 10], ['14:56', '10.30', 5, 'B', 3], ['14:56', '10.30', 172, 'B', 5], ['14:56', '10.29', 6, 'S', 3],
    ['14:56', '10.30', 21, 'B', 2], ['14:56', '10.30', 34, 'B', 2], ['14:56', '10.30', 30, 'B', 4], ['14:56', '10.30', 295, 'B', 21],
    ['14:56', '10.30', 62, 'B', 6], ['14:56', '10.30', 184, 'B', 15], ['14:56', '10.30', 141, 'B', 8], ['14:57', '10.30', 12, 'B', 3],
    ['15:00', '10.30', 2420, '', 194]
];

function fillBook(id, rows) {
    document.getElementById(id).innerHTML = rows.map(([name, price, volume]) =>
        `<tr><th>${name}</th><td>${price}</td><td>${volume}</td></tr>`).join('');
}

function fillTicks() {
    document.getElementById('ticks').innerHTML = ticks.map(([time, price, volume, side, count]) => {
        const cls = side === 'B' ? 'buy' : 'sell';
        return `<tr><td>${time}</td><td>${price}</td><td class="${side ? '' : 'deal'}">${volume}</td>` +
            `<td class="${cls}">${side}</td><td>${count}</td></tr>`;
    }).join('');
}

drawKline();
drawTrend();
drawAxes();
drawDates();
fillBook('asks', asks);
fillBook('bids', bids);
fillTicks();
```
